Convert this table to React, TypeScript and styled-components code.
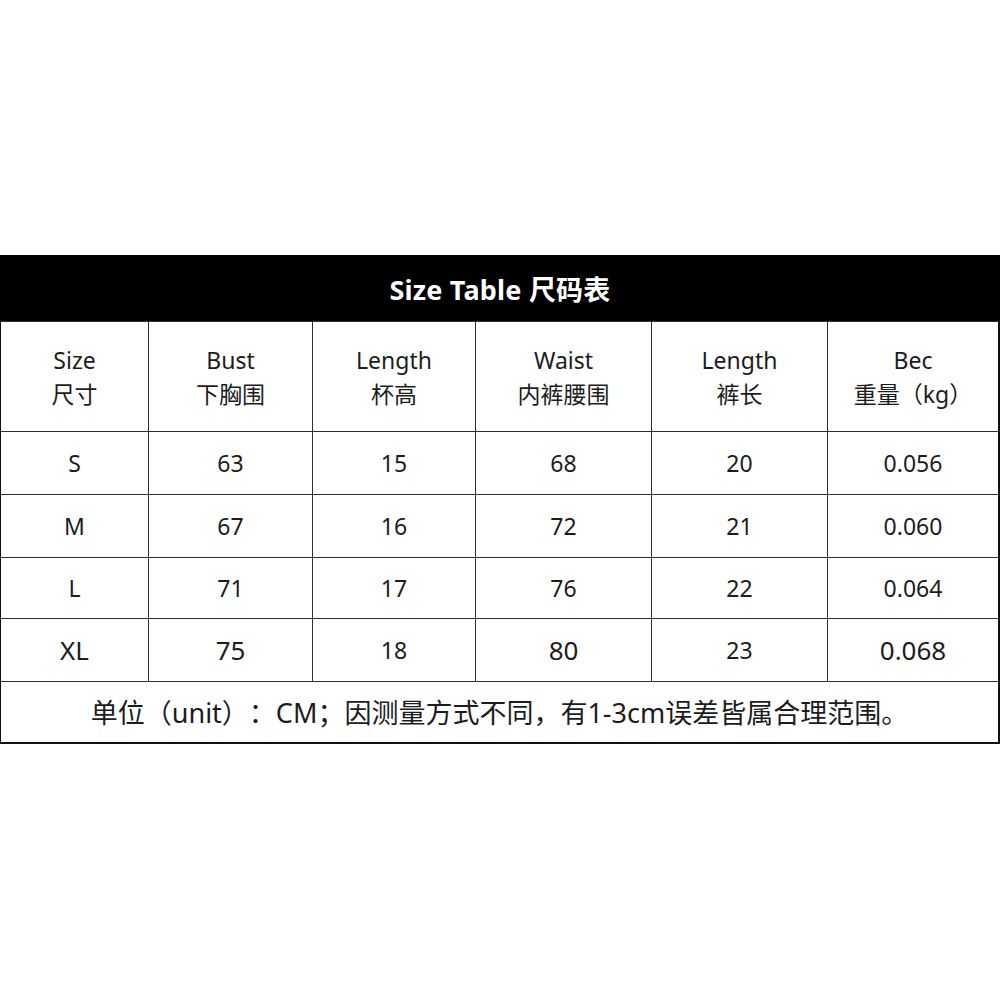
import React from "react";
import styled, { createGlobalStyle } from "styled-components";

const Global = createGlobalStyle`
  html, body { margin: 0; padding: 0; background: #fff; }
  body {
    font-family: "Noto Sans", "Noto Sans CJK SC", sans-serif;
    color: #1c1c1c;
    text-spacing-trim: space-all;
  }
`;

const Page = styled.div`
  width: 1000px;
  height: 1000px;
  padding-top: 255px;
  box-sizing: border-box;
  background: #fff;
`;

const Sheet = styled.div`
  width: 1000px;
  box-sizing: border-box;
`;

const TitleBar = styled.div`
  height: 66px;
  background: #000;
  color: #fff;
  display: flex;
  align-items: center;
  justify-content: center;
  font-size: 27px;
  font-weight: 700;
  letter-spacing: 0.2px;
`;

const Grid = styled.div`
  display: grid;
  grid-template-columns: 147px 163px 162px 175px 175px 170px;
  grid-template-rows: 109px 62px 62px 60px 62px 60px;
  gap: 1px;
  background: #2e2e2e;
  border-top: 1px solid #2e2e2e;
  border-left: 1px solid #111;
  border-right: 2px solid #111;
  border-bottom: 2px solid #111;
`;

const Cell = styled.div<{ $big?: boolean }>`
  background: #fff;
  display: flex;
  align-items: center;
  justify-content: center;
  font-size: ${(p) => (p.$big ? "26px" : "23px")};
  line-height: 1;
`;

const HeadCell = styled.div`
  background: #fff;
  display: flex;
  flex-direction: column;
  align-items: center;
  justify-content: center;
  font-size: 23px;
  line-height: 34px;
`;

const Note = styled.div`
  grid-column: 1 / -1;
  background: #fff;
  display: flex;
  align-items: center;
  justify-content: center;
  font-size: 27px;
  line-height: 1;
`;

const heads: [string, string][] = [
  ["Size", "尺寸"],
  ["Bust", "下胸围"],
  ["Length", "杯高"],
  ["Waist", "内裤腰围"],
  ["Length", "裤长"],
  ["Bec", "重量（kg）"],
];

const rows: { v: string[]; big?: boolean[] }[] = [
  { v: ["S", "63", "15", "68", "20", "0.056"] },
  { v: ["M", "67", "16", "72", "21", "0.060"] },
  { v: ["L", "71", "17", "76", "22", "0.064"] },
  { v: ["XL", "75", "18", "80", "23", "0.068"], big: [true, true, false, true, false, true] },
];

export default function App() {
  return (
    <Page>
      <Global />
      <Sheet>
        <TitleBar>Size Table 尺码表</TitleBar>
        <Grid>
          {heads.map(([en, zh], i) => (
            <HeadCell key={i}>
              <span>{en}</span>
              <span>{zh}</span>
            </HeadCell>
          ))}
          {rows.map((r, ri) =>
            r.v.map((val, ci) => (
              <Cell key={`${ri}-${ci}`} $big={r.big ? r.big[ci] : false}>
                {val}
              </Cell>
            ))
          )}
          <Note>单位（unit）：CM；因测量方式不同，有1-3cm误差皆属合理范围。</Note>
        </Grid>
      </Sheet>
    </Page>
  );
}
